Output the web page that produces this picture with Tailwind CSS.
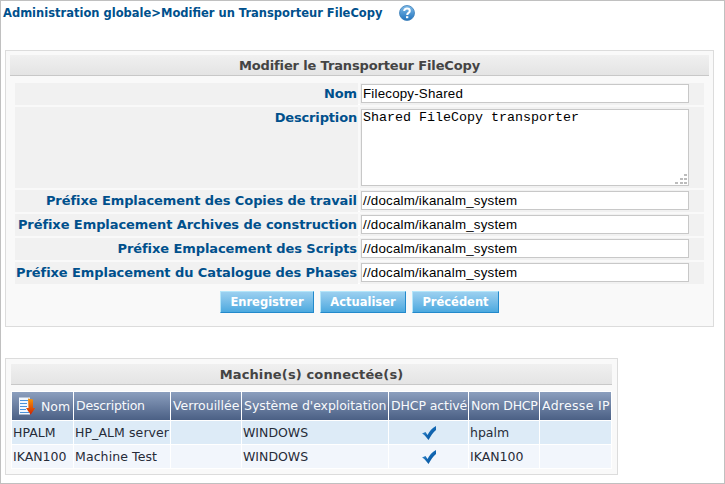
<!DOCTYPE html>
<html lang="fr">
<head>
<meta charset="utf-8">
<title>Modifier un Transporteur FileCopy</title>
<script src="https://cdn.jsdelivr.net/npm/@tailwindcss/browser@4"></script>
</head>
<body class="bg-white">
<div class="flex h-[484px] w-[725px] flex-col items-start overflow-hidden border border-[#c0c0c0] pl-1 font-['DejaVu_Sans',Verdana,sans-serif] text-[13px] whitespace-nowrap">
  <header class="-ml-0.5 flex h-[49px] items-start pt-1">
    <h1 class="w-[396px] text-[11.500px] leading-4 font-bold text-[#00508c]">Administration globale&gt;Modifier un Transporteur FileCopy</h1>
    <svg class="h-4 w-4" viewBox="0 0 16 16"><defs><linearGradient id="help" x1="0" y1="0" x2="0" y2="1"><stop offset="0" stop-color="#80bce9"/><stop offset="1" stop-color="#2173bd"/></linearGradient></defs><circle cx="8" cy="8" r="7.500" fill="url(#help)" stroke="#3c7fb9" stroke-width=".8"/><path d="M5.200 6C5.200 2.600 10.800 2.800 10.800 5.900 10.800 8 8.200 7.800 8.200 10" fill="none" stroke="#fff" stroke-width="2"/><path d="M7 11.200h2.300v2H7z" fill="#fff"/></svg>
  </header>

  <section class="h-[277px] w-[709px] border border-[#dcdcdc] bg-[#f9f9f9] px-1 pt-1">
    <h2 class="h-[21px] border-b border-[#c8c8c8] bg-linear-to-b from-[#f0f0f0] to-[#e4e4e4] text-center leading-[21px] font-bold tracking-[-0.14px] text-[#444]">Modifier le Transporteur FileCopy</h2>
    <form class="mt-[7px] flex flex-col gap-0.5 px-[5px] font-bold text-[#00508c]">
      <div class="grid h-[22px] grid-cols-[343px_344px] gap-x-0.5 border-b border-white">
        <label class="bg-[#f1f1f1] pr-px text-right leading-[22px] tracking-[-0.08px]">Nom</label>
        <div class="bg-[#f1f1f1] pt-px pl-px"><div class="h-[19px] w-[328px] border border-[#c8c8c8] bg-white pl-px font-['Liberation_Sans',Arial,sans-serif] text-[13.333px] leading-[17px] font-normal tracking-[0.2px] text-black">Filecopy-Shared</div></div>
      </div>
      <div class="grid h-[81px] grid-cols-[343px_344px] gap-x-0.5">
        <label class="bg-[#f1f1f1] pr-px text-right leading-[21px] tracking-[-0.16px]">Description</label>
        <div class="bg-[#f1f1f1] pt-0.5 pl-px"><div class="flex h-[77px] w-[328px] items-end justify-between border border-[#c8c8c8] bg-white pr-px pb-px pl-px font-['Liberation_Mono','Courier_New',monospace] text-[13.333px] font-normal text-black"><span class="self-start leading-[15px]">Shared FileCopy transporter</span><svg class="h-[10px] w-3" viewBox="0 0 12 10" fill="#bcbcbc" shape-rendering="crispEdges"><path d="M9 0h3v2H9zM5 4h3v2H5zM9 4h3v2H9zM0 8h3v2H0zM5 8h3v2H5zM9 8h3v2H9z"/></svg></div></div>
      </div>
      <div class="grid h-[22px] grid-cols-[343px_344px] gap-x-0.5 border-b border-white">
        <label class="bg-[#f1f1f1] pr-px text-right leading-[22px] tracking-[-0.08px]">Préfixe Emplacement des Copies de travail</label>
        <div class="bg-[#f1f1f1] pt-px pl-px"><div class="h-[19px] w-[328px] border border-[#c8c8c8] bg-white pl-px font-['Liberation_Sans',Arial,sans-serif] text-[13.333px] leading-[17px] font-normal tracking-[0.2px] text-black">//docalm/ikanalm_system</div></div>
      </div>
      <div class="grid h-[22px] grid-cols-[343px_344px] gap-x-0.5 border-b border-white">
        <label class="bg-[#f1f1f1] pr-px text-right leading-[22px] tracking-[-0.08px]">Préfixe Emplacement Archives de construction</label>
        <div class="bg-[#f1f1f1] pt-px pl-px"><div class="h-[19px] w-[328px] border border-[#c8c8c8] bg-white pl-px font-['Liberation_Sans',Arial,sans-serif] text-[13.333px] leading-[17px] font-normal tracking-[0.2px] text-black">//docalm/ikanalm_system</div></div>
      </div>
      <div class="grid h-[22px] grid-cols-[343px_344px] gap-x-0.5 border-b border-white">
        <label class="bg-[#f1f1f1] pr-px text-right leading-[22px] tracking-[-0.08px]">Préfixe Emplacement des Scripts</label>
        <div class="bg-[#f1f1f1] pt-px pl-px"><div class="h-[19px] w-[328px] border border-[#c8c8c8] bg-white pl-px font-['Liberation_Sans',Arial,sans-serif] text-[13.333px] leading-[17px] font-normal tracking-[0.2px] text-black">//docalm/ikanalm_system</div></div>
      </div>
      <div class="grid h-[22px] grid-cols-[343px_344px] gap-x-0.5 border-b border-white">
        <label class="bg-[#f1f1f1] pr-px text-right leading-[22px] tracking-[-0.08px]">Préfixe Emplacement du Catalogue des Phases</label>
        <div class="bg-[#f1f1f1] pt-px pl-px"><div class="h-[19px] w-[328px] border border-[#c8c8c8] bg-white pl-px font-['Liberation_Sans',Arial,sans-serif] text-[13.333px] leading-[17px] font-normal tracking-[0.2px] text-black">//docalm/ikanalm_system</div></div>
      </div>
    </form>
    <div class="mt-[7px] ml-[210px] flex gap-1.5 text-[11.500px] leading-5 font-bold text-white">
      <button type="button" class="h-[22px] w-[94px] border border-t-[#b5e6fa] border-r-[#2389cb] border-b-[#2389cb] border-l-[#b5e6fa] bg-linear-to-b from-[#9bd0f0] to-[#4ba9df]">Enregistrer</button>
      <button type="button" class="h-[22px] w-[86px] border border-t-[#b5e6fa] border-r-[#2389cb] border-b-[#2389cb] border-l-[#b5e6fa] bg-linear-to-b from-[#9bd0f0] to-[#4ba9df]">Actualiser</button>
      <button type="button" class="h-[22px] w-[87px] border border-t-[#b5e6fa] border-r-[#2389cb] border-b-[#2389cb] border-l-[#b5e6fa] bg-linear-to-b from-[#9bd0f0] to-[#4ba9df]">Précédent</button>
    </div>
  </section>

  <section class="mt-[31px] h-[117px] w-[613px] border border-[#dcdcdc] bg-[#f9f9f9] px-[5px] pt-[5px]">
    <h2 class="h-[21px] border-b border-[#c8c8c8] bg-linear-to-b from-[#f0f0f0] to-[#e4e4e4] text-center leading-[21px] font-bold tracking-[0.14px] text-[#444]">Machine(s) connectée(s)</h2>
    <div class="mt-1.5 grid grid-cols-[61px_96px_70px_146px_79px_70px_71px] grid-rows-[28px_23px_23px] gap-px bg-white p-px text-[12.500px] leading-[23px] text-[#262b38]">
      <div class="flex items-center bg-linear-to-b from-[#8c9fbe] to-[#4b6085] pl-1.5 text-[#f8fafc]">
        <svg class="mr-1.5 h-[18px] w-[17px] shrink-0" viewBox="0 0 17 18"><defs><linearGradient id="sort" x1="0" y1="0" x2="0" y2="1"><stop offset="0" stop-color="#f5960a"/><stop offset="1" stop-color="#cf2200"/></linearGradient></defs><path d="M1 .5h11v17H1z" fill="#f2f8ff"/><path d="M2 3.500h8M2 6.500h7M2 9.500h7M2 12.500h6M2 15.500h9" stroke="#4b92da" stroke-width="1"/><path d="M10 1.500 15 2.500V11h2.200L12.700 17.800 8 11h2.500z" fill="url(#sort)"/></svg>Nom
      </div>
      <div class="bg-linear-to-b from-[#8c9fbe] to-[#4b6085] pl-0.5 leading-7 tracking-[-0.22px] text-[#f8fafc]">Description</div>
      <div class="bg-linear-to-b from-[#8c9fbe] to-[#4b6085] pl-0.5 leading-7 text-[#f8fafc]">Verrouillée</div>
      <div class="bg-linear-to-b from-[#8c9fbe] to-[#4b6085] pl-0.5 leading-7 tracking-[-0.05px] text-[#f8fafc]">Système d'exploitation</div>
      <div class="bg-linear-to-b from-[#8c9fbe] to-[#4b6085] pl-0.5 leading-7 tracking-[-0.1px] text-[#f8fafc]">DHCP activé</div>
      <div class="bg-linear-to-b from-[#8c9fbe] to-[#4b6085] pl-0.5 leading-7 tracking-[-0.22px] text-[#f8fafc]">Nom DHCP</div>
      <div class="bg-linear-to-b from-[#8c9fbe] to-[#4b6085] pl-0.5 leading-7 tracking-[0.3px] text-[#f8fafc]">Adresse IP</div>
      <div class="bg-[#ddebf7] pl-px">HPALM</div>
      <div class="bg-[#ddebf7] pl-px tracking-[0.08px]">HP_ALM server</div>
      <div class="bg-[#ddebf7]"></div>
      <div class="bg-[#ddebf7] pl-px">WINDOWS</div>
      <div class="flex items-center justify-center bg-[#ddebf7]"><svg class="h-4 w-4" viewBox="0 0 16 16"><defs><linearGradient id="tick-a" x1="0" y1="0" x2="1" y2="1"><stop offset="0" stop-color="#56a0d8"/><stop offset=".5" stop-color="#1268b4"/><stop offset="1" stop-color="#064c90"/></linearGradient></defs><path d="M1 8.500 4.500 7 6.500 10C8.500 6 11 3 15 1V5C12 7.500 10 10.500 7.500 15 5.500 13 4 10 1 8.500Z" fill="url(#tick-a)"/></svg></div>
      <div class="bg-[#ddebf7] pl-px">hpalm</div>
      <div class="bg-[#ddebf7]"></div>
      <div class="bg-[#f2f6fc] pl-px">IKAN100</div>
      <div class="bg-[#f2f6fc] pl-px tracking-[0.1px]">Machine Test</div>
      <div class="bg-[#f2f6fc]"></div>
      <div class="bg-[#f2f6fc] pl-px">WINDOWS</div>
      <div class="flex items-center justify-center bg-[#f2f6fc]"><svg class="h-4 w-4" viewBox="0 0 16 16"><defs><linearGradient id="tick-b" x1="0" y1="0" x2="1" y2="1"><stop offset="0" stop-color="#56a0d8"/><stop offset=".5" stop-color="#1268b4"/><stop offset="1" stop-color="#064c90"/></linearGradient></defs><path d="M1 8.500 4.500 7 6.500 10C8.500 6 11 3 15 1V5C12 7.500 10 10.500 7.500 15 5.500 13 4 10 1 8.500Z" fill="url(#tick-b)"/></svg></div>
      <div class="bg-[#f2f6fc] pl-px">IKAN100</div>
      <div class="bg-[#f2f6fc]"></div>
    </div>
  </section>
</div>
</body>
</html>
